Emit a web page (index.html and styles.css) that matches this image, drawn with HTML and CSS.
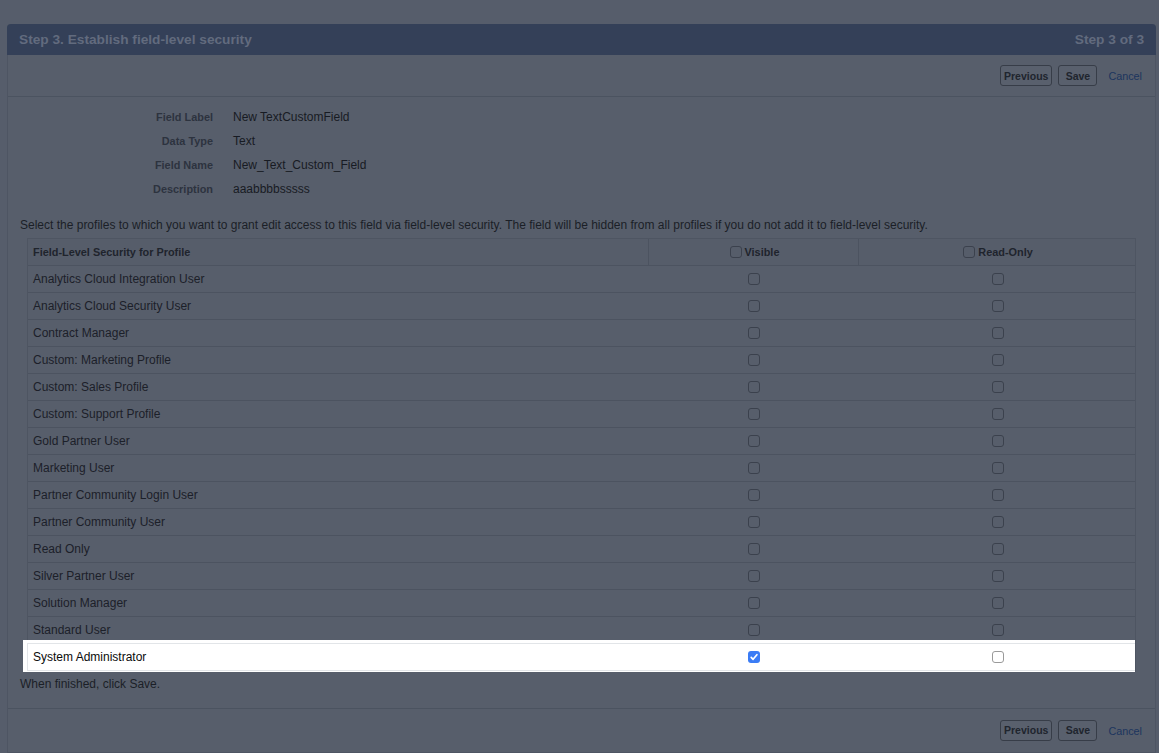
FILE: index.html
```html
<!DOCTYPE html>
<html lang="en">

<head>
    <meta charset="UTF-8">
    <meta name="viewport" content="width=device-width, initial-scale=1.0">
    <title>New Custom Field - Step 3</title>
    <link rel="stylesheet" href="styles.css">
</head>

<body>
    <div class="page-block">
        <div class="pb-header">
            <h2 class="pb-title">Step 3. Establish field-level security</h2>
            <span class="pb-step">Step 3 of 3</span>
        </div>

        <div class="pb-buttons">
            <button class="btn" type="button">Previous</button>
            <button class="btn" type="button">Save</button>
            <a class="cancel-link" href="#">Cancel</a>
        </div>

        <div class="pb-body">
            <div class="detail-list">
                <span class="detail-label">Field Label</span><span class="detail-value">New TextCustomField</span>
                <span class="detail-label">Data Type</span><span class="detail-value">Text</span>
                <span class="detail-label">Field Name</span><span class="detail-value">New_Text_Custom_Field</span>
                <span class="detail-label">Description</span><span class="detail-value">aaabbbbsssss</span>
            </div>

            <p class="instructions">Select the profiles to which you want to grant edit access to this field via field-level security. The field will be hidden from all profiles if you do not add it to field-level security.</p>

            <div class="fls-table">
                <div class="fls-row fls-head">
                    <div class="fls-cell">Field-Level Security for Profile</div>
                    <div class="fls-cell fls-center"><span class="cb"></span>Visible</div>
                    <div class="fls-cell fls-center"><span class="cb"></span>Read-Only</div>
                </div>
                <div class="fls-row"><div class="fls-cell">Analytics Cloud Integration User</div><div class="fls-cell fls-center"><span class="cb"></span></div><div class="fls-cell fls-center"><span class="cb"></span></div></div>
                <div class="fls-row"><div class="fls-cell">Analytics Cloud Security User</div><div class="fls-cell fls-center"><span class="cb"></span></div><div class="fls-cell fls-center"><span class="cb"></span></div></div>
                <div class="fls-row"><div class="fls-cell">Contract Manager</div><div class="fls-cell fls-center"><span class="cb"></span></div><div class="fls-cell fls-center"><span class="cb"></span></div></div>
                <div class="fls-row"><div class="fls-cell">Custom: Marketing Profile</div><div class="fls-cell fls-center"><span class="cb"></span></div><div class="fls-cell fls-center"><span class="cb"></span></div></div>
                <div class="fls-row"><div class="fls-cell">Custom: Sales Profile</div><div class="fls-cell fls-center"><span class="cb"></span></div><div class="fls-cell fls-center"><span class="cb"></span></div></div>
                <div class="fls-row"><div class="fls-cell">Custom: Support Profile</div><div class="fls-cell fls-center"><span class="cb"></span></div><div class="fls-cell fls-center"><span class="cb"></span></div></div>
                <div class="fls-row"><div class="fls-cell">Gold Partner User</div><div class="fls-cell fls-center"><span class="cb"></span></div><div class="fls-cell fls-center"><span class="cb"></span></div></div>
                <div class="fls-row"><div class="fls-cell">Marketing User</div><div class="fls-cell fls-center"><span class="cb"></span></div><div class="fls-cell fls-center"><span class="cb"></span></div></div>
                <div class="fls-row"><div class="fls-cell">Partner Community Login User</div><div class="fls-cell fls-center"><span class="cb"></span></div><div class="fls-cell fls-center"><span class="cb"></span></div></div>
                <div class="fls-row"><div class="fls-cell">Partner Community User</div><div class="fls-cell fls-center"><span class="cb"></span></div><div class="fls-cell fls-center"><span class="cb"></span></div></div>
                <div class="fls-row"><div class="fls-cell">Read Only</div><div class="fls-cell fls-center"><span class="cb"></span></div><div class="fls-cell fls-center"><span class="cb"></span></div></div>
                <div class="fls-row"><div class="fls-cell">Silver Partner User</div><div class="fls-cell fls-center"><span class="cb"></span></div><div class="fls-cell fls-center"><span class="cb"></span></div></div>
                <div class="fls-row"><div class="fls-cell">Solution Manager</div><div class="fls-cell fls-center"><span class="cb"></span></div><div class="fls-cell fls-center"><span class="cb"></span></div></div>
                <div class="fls-row"><div class="fls-cell">Standard User</div><div class="fls-cell fls-center"><span class="cb"></span></div><div class="fls-cell fls-center"><span class="cb"></span></div></div>
                <!-- walkthrough spotlight -->
                <div class="fls-row spotlight">
                    <div class="fls-cell">System Administrator</div>
                    <div class="fls-cell fls-center">
                        <span class="cb cb-checked">
                            <svg viewBox="0 0 12 12" width="12" height="12"><path d="M3.2 6.3 5.1 8.3 8.9 3.7" fill="none" stroke="#fff" stroke-width="1.7" stroke-linecap="round" stroke-linejoin="round" /></svg>
                        </span>
                    </div>
                    <div class="fls-cell fls-center"><span class="cb"></span></div>
                </div>
            </div>

            <p class="finish-note">When finished, click Save.</p>
        </div>

        <div class="pb-buttons pb-bottom">
            <button class="btn" type="button">Previous</button>
            <button class="btn" type="button">Save</button>
            <a class="cancel-link" href="#">Cancel</a>
        </div>
    </div>
</body>

</html>
```

FILE: styles.css
```css
body {
    margin: 0;
    padding: 24px 3px 0 7px;
    background: #565d6b;
    font-family: "Liberation Sans", Arial, sans-serif;
    color: #1b1f27;
    overflow: hidden;
}

.page-block {
    background: #575e6b;
    border: 1px solid #4e5563;
    border-top: none;
    border-radius: 4px 4px 0 0;
    min-height: 728px;
}

/* Header bar */
.pb-header {
    height: 31px;
    background: #344058;
    border-radius: 4px 4px 0 0;
    margin: 0 -1px;
    padding: 0 12px;
    display: flex;
    align-items: center;
    justify-content: space-between;
}

.pb-title,
.pb-step {
    margin: 0;
    font-size: 13.7px;
    font-weight: bold;
    color: #626b7e;
}

/* Buttons */
.pb-buttons {
    height: 41px;
    border-bottom: 1px solid #4b5360;
    display: flex;
    align-items: center;
    justify-content: flex-end;
    padding-right: 13px;
}

.pb-bottom {
    border-bottom: none;
    border-top: 1px solid #4b5360;
    height: 42px;
    padding-bottom: 1px;
}

.btn {
    height: 21px;
    min-width: 39px;
    padding: 0 3px;
    margin-left: 6px;
    font-family: "Liberation Sans", Arial, sans-serif;
    font-size: 10.5px;
    font-weight: bold;
    color: #20252e;
    background: #59606d;
    border: 1px solid #373d48;
    border-radius: 3px;
}

.cancel-link {
    margin-left: 11px;
    padding-top: 1px;
    font-size: 10.8px;
    color: #1c355e;
    text-decoration: none;
}

/* Body */
.pb-body {
    padding: 8px 12px 0;
}

.detail-list {
    display: grid;
    grid-template-columns: 193px 1fr;
    column-gap: 20px;
    grid-auto-rows: 24px;
    align-items: center;
}

.detail-label {
    text-align: right;
    font-size: 10.9px;
    font-weight: bold;
    color: #2d333f;
}

.detail-value {
    font-size: 12px;
    color: #171b23;
}

.instructions {
    margin: 16px 0 5px;
    font-size: 12px;
    line-height: 16px;
    color: #1b1f27;
}

/* Field-level security table */
.fls-table {
    margin: 0 7px;
    border: 1px solid #4e5562;
}

.fls-row {
    display: grid;
    grid-template-columns: 620px 210px 1fr;
    height: 26px;
    border-bottom: 1px solid #4c5360;
    font-size: 12px;
    color: #1c2029;
}

.fls-row:last-child {
    border-bottom: none;
}

.fls-head {
    background: #565d6a;
    font-size: 10.9px;
    font-weight: bold;
    color: #1f242d;
}

.fls-head .fls-cell + .fls-cell {
    border-left: 1px solid #4c5360;
}

.fls-cell {
    display: flex;
    align-items: center;
    padding-left: 5px;
}

.fls-center {
    justify-content: center;
    padding-left: 2px;
}

.cb {
    width: 12px;
    height: 12px;
    box-sizing: border-box;
    border: 1px solid #3b414d;
    border-radius: 3px;
    display: inline-flex;
    align-items: center;
    justify-content: center;
}

.fls-head .cb {
    margin-right: 3px;
}

/* Highlighted row sits above the dimmed page */
.spotlight {
    background: #fff;
    color: #0b0b0b;
    height: 26px;
    margin: -1px 0 0 -1px;
    border-top: 1px solid #e2e5e8;
    border-left: 1px solid #e2e5e8;
    border-bottom: 1px solid #e2e5e8 !important;
    box-shadow: -4px 0 0 #fff, 0 -3px 0 #fff, -4px -3px 0 #fff, 0 1px 0 #fff, -4px 1px 0 #fff;
}

.spotlight .cb {
    border-color: #9a9a9a;
}

.spotlight .cb-checked {
    border: none;
    background: #3b7cf5;
}

.cb svg {
    display: block;
}

.finish-note {
    margin: 4px 0 16px;
    font-size: 12px;
    line-height: 16px;
    color: #1b1f27;
}
```
